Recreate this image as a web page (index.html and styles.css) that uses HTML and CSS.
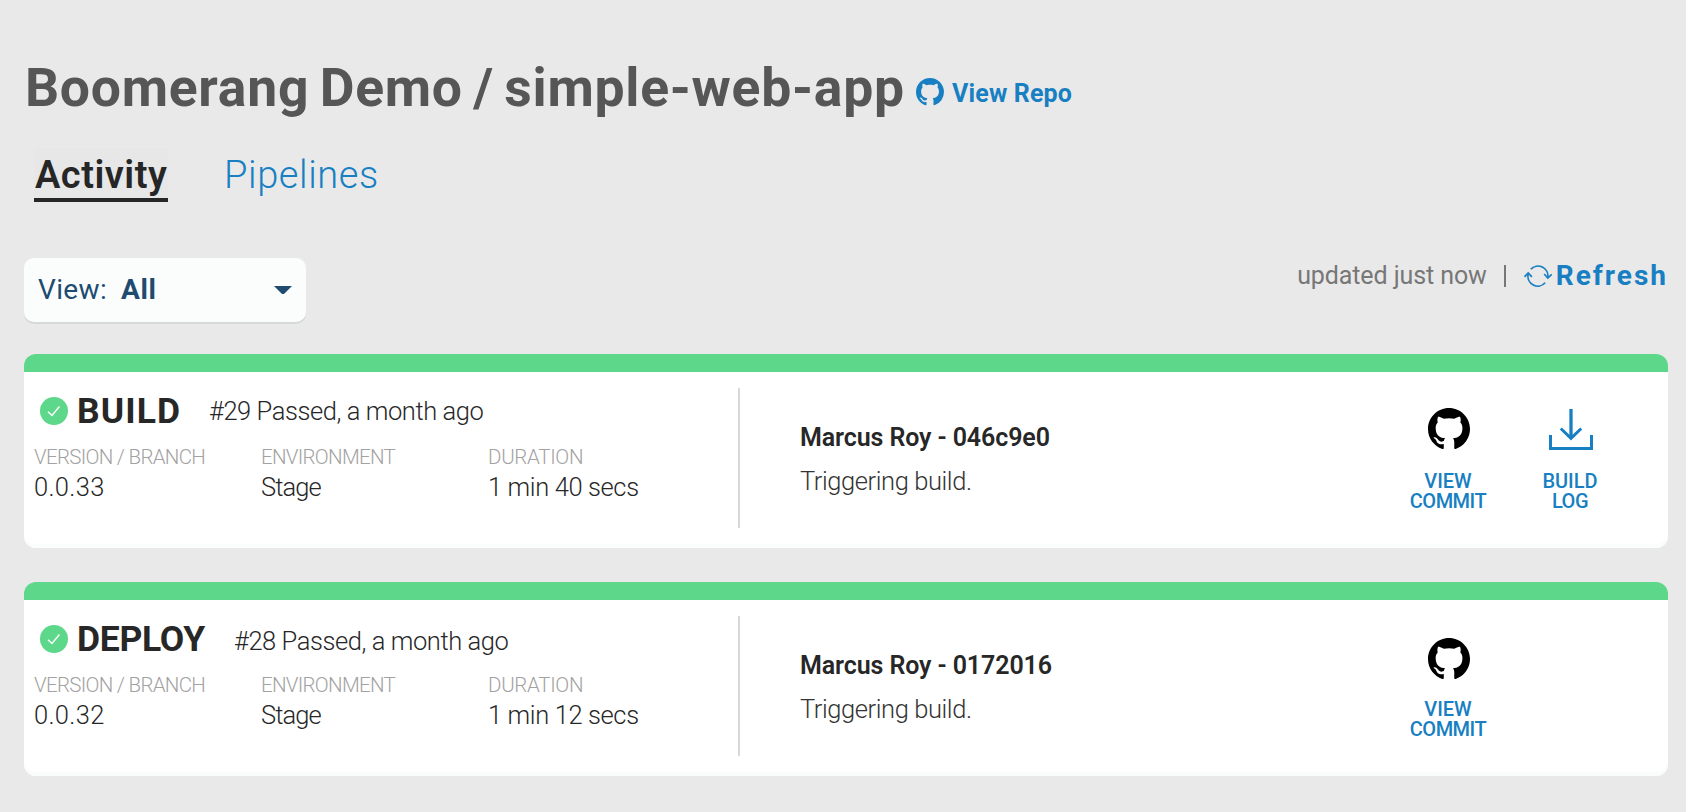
FILE: index.html
```html
<!DOCTYPE html>
<html lang="en">
<head>
<meta charset="utf-8">
<title>Boomerang Demo / simple-web-app</title>
<link rel="stylesheet" href="styles.css">
</head>
<body>
<svg class="sprite" width="0" height="0" aria-hidden="true">
  <symbol id="github" viewBox="0 0 16 16"><path d="M8 0C3.58 0 0 3.58 0 8c0 3.54 2.29 6.53 5.47 7.59.4.07.55-.17.55-.38 0-.19-.01-.82-.01-1.49-2.01.37-2.53-.49-2.69-.94-.09-.23-.48-.94-.82-1.13-.28-.15-.68-.52-.01-.53.63-.01 1.08.58 1.23.82.72 1.21 1.87.87 2.33.66.07-.52.28-.87.51-1.07-1.78-.2-3.64-.89-3.64-3.95 0-.87.31-1.59.82-2.15-.08-.2-.36-1.02.08-2.12 0 0 .67-.21 2.2.82.64-.18 1.32-.27 2-.27.68 0 1.36.09 2 .27 1.53-1.04 2.2-.82 2.2-.82.44 1.1.16 1.92.08 2.12.51.56.82 1.27.82 2.15 0 3.07-1.870 3.750-3.650 3.950.29.25.54.73.54 1.48 0 1.07-.01 1.93-.01 2.2 0 .21.15.46.55.38A8.013 8.013 0 0 0 16 8c0-4.420-3.580-8-8-8z"/></symbol>
  <symbol id="check" viewBox="0 0 28 28"><circle cx="14" cy="14" r="14" fill="#5dd88a"/><path d="M8 14.8l4 3.7 7.4-9" fill="none" stroke="#fff" stroke-width="1.5"/></symbol>
</svg>
<main class="page">
  <header class="title-row">
    <h1 class="title">Boomerang Demo / simple-web-app</h1>
    <a class="repo"><svg class="repo-icon"><use href="#github"/></svg><span class="repo-text">View Repo</span></a>
  </header>
  <nav class="tabs">
    <a class="tab tab-active">Activity</a>
    <a class="tab">Pipelines</a>
  </nav>
  <div class="toolbar">
    <div class="dropdown">
      <span class="dropdown-label">View:</span><span class="dropdown-value">All</span>
      <svg class="caret" viewBox="0 0 18 8"><path d="M0 0h18L10.5 7.4q-1.500 1.200-3 0z"/></svg>
    </div>
    <div class="status">
      <span class="updated">updated just now</span>
      <span class="bar"></span>
      <a class="refresh">
        <svg class="refresh-icon" viewBox="0 0 28 22"><g fill="none" stroke="currentColor" stroke-width="1.7"><path d="M6.800 4.200A9.900 9.900 0 0 1 23.800 12.500"/><path d="M20.200 9l3.600 4 3.900-3.700"/><path d="M21.200 17.800A9.900 9.900 0 0 1 4.200 9"/><path d="M.5 11.800L4.200 8l3.700 3.900"/></g></svg>
        <span class="refresh-text">Refresh</span>
      </a>
    </div>
  </div>
  <section class="cards">
    <article class="card">
      <div class="run">
        <div class="run-head"><svg class="check"><use href="#check"/></svg><h2 class="run-name run-name-build">BUILD</h2><span class="run-info">#29 Passed, a month ago</span></div>
        <div class="facts">
          <div class="fact"><div class="fact-label">VERSION / BRANCH</div><div class="fact-value fact-version">0.0.33</div></div>
          <div class="fact"><div class="fact-label">ENVIRONMENT</div><div class="fact-value fact-stage">Stage</div></div>
          <div class="fact"><div class="fact-label fact-label-wide">DURATION</div><div class="fact-value">1 min 40 secs</div></div>
        </div>
      </div>
      <div class="commit"><div class="author">Marcus Roy - 046c9e0</div><div class="message">Triggering build.</div></div>
      <div class="actions">
        <a class="action"><svg class="action-icon black"><use href="#github"/></svg><span class="view">VIEW</span><span class="tight">COMMIT</span></a>
        <a class="action"><svg class="action-icon download" viewBox="0 0 44 42"><g fill="none" stroke="currentColor"><path stroke-width="3.300" d="M22 1v28.500"/><path stroke-width="3" d="M11.800 20.500L22 30.300l10.200-9.800"/><path stroke-width="3" d="M1.500 27v13.500h41V27"/></g></svg><span>BUILD</span><span class="tight">LOG</span></a>
      </div>
    </article>
    <article class="card card-deploy">
      <div class="run">
        <div class="run-head"><svg class="check"><use href="#check"/></svg><h2 class="run-name run-name-deploy">DEPLOY</h2><span class="run-info">#28 Passed, a month ago</span></div>
        <div class="facts">
          <div class="fact"><div class="fact-label">VERSION / BRANCH</div><div class="fact-value fact-version">0.0.32</div></div>
          <div class="fact"><div class="fact-label">ENVIRONMENT</div><div class="fact-value fact-stage">Stage</div></div>
          <div class="fact"><div class="fact-label fact-label-wide">DURATION</div><div class="fact-value">1 min 12 secs</div></div>
        </div>
      </div>
      <div class="commit"><div class="author">Marcus Roy - 0172016</div><div class="message">Triggering build.</div></div>
      <div class="actions">
        <a class="action"><svg class="action-icon black"><use href="#github"/></svg><span class="view">VIEW</span><span class="tight">COMMIT</span></a>
      </div>
    </article>
  </section>
</main>
</body>
</html>
```
FILE: styles.css
```css
* { box-sizing: border-box; }
body {
  margin: 0;
  background: #e9e9e9;
  font-family: Roboto, "Liberation Sans", sans-serif;
  color: #272727;
}
h1, h2 { margin: 0; }
svg { display: block; flex: none; }
.sprite { position: absolute; }
.page { height: 812px; padding: 58px 18px 0 24px; overflow: hidden; }

.title-row { display: flex; height: 60px; white-space: nowrap; }
.title { width: 892px; padding-left: 1px; font-size: 53.5px; line-height: 60px; font-weight: 700; letter-spacing: .72px; word-spacing: -3.500px; color: #565656; }
.repo { display: flex; gap: 8px; height: 28px; margin-top: 20px; color: #187fc2; }
.repo-icon { width: 28px; height: 28px; fill: currentColor; }
.repo-text { padding-top: 2px; font-size: 25px; line-height: 28px; font-weight: 700; letter-spacing: .15px; }

.tabs { display: flex; gap: 56px; margin: 30px 0 0 10px; }
.tab { height: 50px; padding-top: 3px; font-size: 38px; line-height: 48px; font-weight: 300; letter-spacing: .6px; color: #187fc2; }
.tab-active { width: 134px; height: 54px; border-bottom: 4px solid #262626; background: #e7e7e7; padding-left: 1px; font-weight: 600; letter-spacing: .5px; color: #262626; }

.toolbar { display: flex; justify-content: space-between; height: 64px; margin-top: 56px; }
.dropdown { display: flex; align-items: center; width: 282px; height: 64px; padding: 0 14px; border-radius: 10px; background: #fbfdfc; box-shadow: 0 2px 0 #d7d8d8; font-size: 28px; line-height: 64px; color: #204b70; }
.dropdown-label { width: 83px; letter-spacing: .35px; }
.dropdown-value { font-weight: 700; letter-spacing: .6px; }
.caret { width: 18px; height: 8px; margin-left: auto; fill: currentColor; }
.status { display: flex; color: #777; }
.updated { font-size: 25px; line-height: 35px; letter-spacing: -.1px; }
.bar { width: 2px; height: 22px; margin: 7px 18px 0 17px; background: #777; }
.refresh { display: flex; gap: 4px; color: #187fc2; }
.refresh-icon { width: 28px; height: 22px; margin-top: 7px; }
.refresh-text { font-size: 28px; line-height: 36px; font-weight: 700; letter-spacing: 2px; }

.cards { display: grid; gap: 34px; margin-top: 32px; }
.card { display: flex; height: 194px; border-top: 18px solid #5dd88a; border-radius: 12px; background: #fff; box-shadow: inset 0 -4px 0 #fbfcfc; }
.run { width: 714px; padding: 20px 0 0 10px; }
.run-head { display: flex; align-items: center; height: 40px; padding: 0 0 2px 6px; }
.check { width: 28px; height: 28px; margin-right: 9px; }
.run-name { width: 132px; font-size: 35.5px; line-height: 40px; font-weight: 700; letter-spacing: 1.1px; }
.run-name-deploy { width: 157px; letter-spacing: -.3px; }
.run-info { font-size: 25.5px; line-height: 38px; font-weight: 300; letter-spacing: -.43px; }
.card-deploy .run-info { padding-top: 4px; }
.facts { display: flex; margin-top: 14px; }
.fact { width: 227px; white-space: nowrap; font-weight: 300; }
.fact-label { font-size: 20.5px; line-height: 22px; letter-spacing: -.7px; color: #a2a2a2; }
.fact-label-wide { letter-spacing: -.3px; }
.fact-value { margin-top: 3px; font-size: 25.5px; line-height: 32px; letter-spacing: -.38px; }
.fact-version { letter-spacing: .3px; }
.fact-stage { letter-spacing: -.9px; }
.commit { width: 650px; height: 140px; margin-top: 16px; padding: 32px 0 0 60px; border-left: 2px solid #d8d8d8; }
.author { font-size: 25px; line-height: 36px; font-weight: 600; letter-spacing: -.1px; }
.message { margin-top: 7px; font-size: 25.5px; line-height: 36px; font-weight: 300; letter-spacing: -.42px; color: #333; }
.actions { display: flex; padding-top: 36px; }
.action { display: flex; flex-direction: column; align-items: center; width: 122px; font-size: 20px; line-height: 20px; font-weight: 500; color: #187fc2; }
.action span { margin-left: -2px; }
.action-icon { width: 42px; height: 42px; margin-bottom: 21px; }
.black { fill: #000; }
.download { width: 44px; }
.tight { letter-spacing: -.5px; }
.card-deploy .actions { padding-top: 38px; }
.card-deploy .action-icon { margin-bottom: 19px; }
```
